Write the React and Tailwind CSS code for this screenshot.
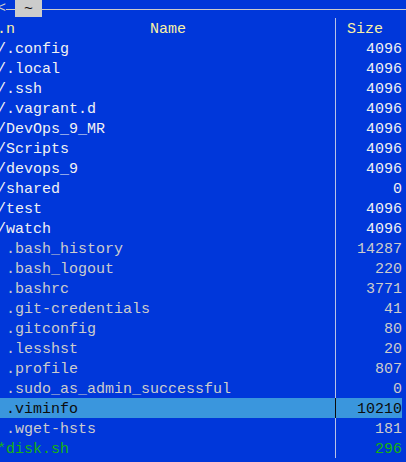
import React from "react";

const entries = [
  { name: "/.config", size: "4096", kind: "dir" },
  { name: "/.local", size: "4096", kind: "dir" },
  { name: "/.ssh", size: "4096", kind: "dir" },
  { name: "/.vagrant.d", size: "4096", kind: "dir" },
  { name: "/DevOps_9_MR", size: "4096", kind: "dir" },
  { name: "/Scripts", size: "4096", kind: "dir" },
  { name: "/devops_9", size: "4096", kind: "dir" },
  { name: "/shared", size: "0", kind: "dir" },
  { name: "/test", size: "4096", kind: "dir" },
  { name: "/watch", size: "4096", kind: "dir" },
  { name: " .bash_history", size: "14287", kind: "file" },
  { name: " .bash_logout", size: "220", kind: "file" },
  { name: " .bashrc", size: "3771", kind: "file" },
  { name: " .git-credentials", size: "41", kind: "file" },
  { name: " .gitconfig", size: "80", kind: "file" },
  { name: " .lesshst", size: "20", kind: "file" },
  { name: " .profile", size: "807", kind: "file" },
  { name: " .sudo_as_admin_successful", size: "0", kind: "file" },
  { name: " .viminfo", size: "10210", kind: "file", selected: true },
  { name: " .wget-hsts", size: "181", kind: "file" },
  { name: "*disk.sh", size: "296", kind: "exec" },
];

function Row({ entry }) {
  let color = "text-[#cccccc]";
  if (entry.kind === "dir") color = "text-[#f2f2f2]";
  if (entry.kind === "exec") color = "text-[#16b20e]";
  if (entry.selected) color = "text-[#0c0c0c]";

  return (
    <div className={"flex h-[20px] w-[402px] " + color + (entry.selected ? " bg-[#3a96dd]" : "")}>
      <div className="w-[335px] overflow-hidden whitespace-pre pt-[4px]">
        <span className="-ml-[3px] block">{entry.name}</span>
      </div>
      <div
        className={
          "h-full w-[67px] border-l pt-[4px] text-right " +
          (entry.selected ? "border-[#0c0c0c]" : "border-[#b8c2e6]")
        }
      >
        {entry.size}
      </div>
    </div>
  );
}

export default function App() {
  return (
    <div
      className="h-[462px] w-[406px] overflow-hidden bg-[#0037da] text-[15px] leading-[16px]"
      style={{ fontFamily: '"Liberation Mono", "DejaVu Sans Mono", monospace' }}
    >
      {/* title line */}
      <div className="flex h-[18px] items-center text-[#cccccc]">
        <span className="-ml-[3px] w-[9px] leading-[16px]">&lt;</span>
        <div className="h-px w-[9px] bg-[#cccccc]" />
        <div className="flex h-[17px] w-[27px] items-center justify-center self-start bg-[#cccccc] pt-[2px] text-[#0c0c0c]">
          ~
        </div>
        <div className="h-px flex-1 bg-[#cccccc]" />
      </div>

      {/* header */}
      <div className="flex h-[20px] w-[402px] text-[#f9f1a5]">
        <div className="w-[335px] whitespace-pre pt-[4px]">
          <span className="-ml-[3px] block">{".n               Name"}</span>
        </div>
        <div className="h-full w-[67px] border-l border-[#b8c2e6] pl-[11px] pt-[4px]">Size</div>
      </div>

      {entries.map((e) => (
        <Row key={e.name} entry={e} />
      ))}
    </div>
  );
}
